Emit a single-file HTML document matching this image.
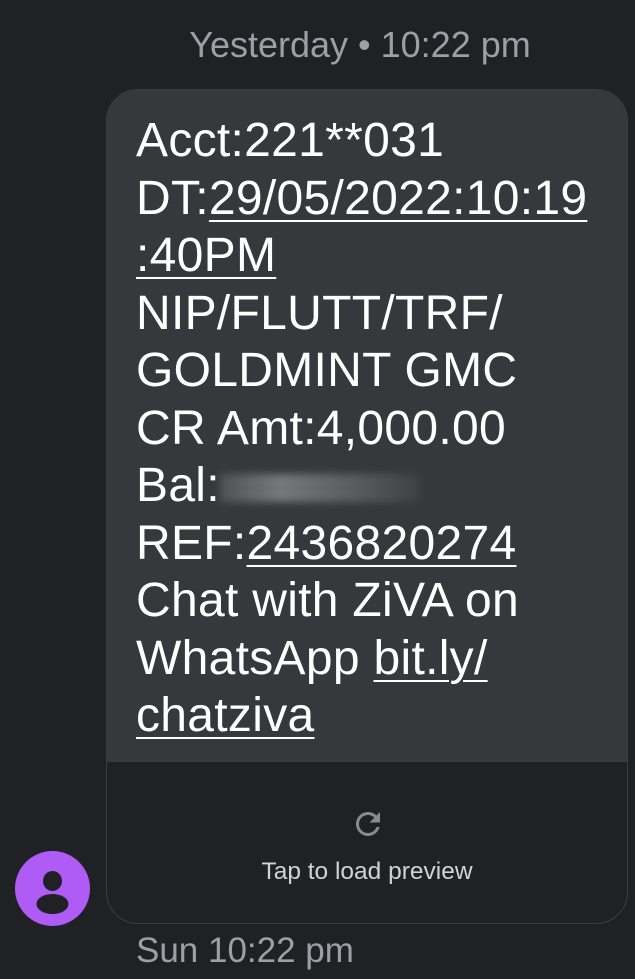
<!DOCTYPE html>
<html><head><meta charset="utf-8"><style>
html,body{margin:0;padding:0;}
body{width:635px;height:979px;background:#202124;position:relative;overflow:hidden;font-family:"Liberation Sans",sans-serif;}
.hdr{position:absolute;top:24px;left:0;width:720px;text-align:center;color:#9aa0a6;font-size:36px;}
.bub{position:absolute;left:106px;top:89px;width:522px;height:835px;border-radius:32px;background:#202124;border:1.5px solid #3c3d41;box-sizing:border-box;overflow:hidden;}
.top{position:absolute;left:0;top:0;right:0;height:672px;background:#37383c;}
.txt{position:absolute;left:29px;top:22px;color:#fff;font-size:48px;line-height:57.5px;white-space:nowrap;letter-spacing:0.3px;}
.txt u{text-decoration-thickness:2px;text-underline-offset:6px;}
.blur{display:inline-block;width:200px;height:28px;vertical-align:middle;background:linear-gradient(90deg,#6a6b6e,#b8b8ba 30%,#8a8b8d 60%,#48494c);filter:blur(4px);opacity:.5;}
.tap{position:absolute;top:768px;left:0;width:100%;text-align:center;color:#d0d2d5;font-size:24.5px;}
.ico{position:absolute;left:243px;top:716px;}
.av{position:absolute;left:15px;top:851px;width:75px;height:75px;border-radius:50%;background:#af5cf7;}
.sun{position:absolute;left:136px;top:931px;color:#9aa0a6;font-size:35px;}
</style></head><body>
<div class="hdr">Yesterday • 10:22 pm</div>
<div class="bub">
<div class="top"></div>
<div class="txt">Acct:221**031<br>DT:<u>29/05/2022:10:19</u><br><u>:40PM</u><br>NIP/FLUTT/TRF/<br>GOLDMINT GMC<br>CR Amt:4,000.00<br>Bal:<span class="blur"></span><br>REF:<u>2436820274</u><br>Chat with ZiVA on<br>WhatsApp <u>bit.ly/</u><br><u>chatziva</u></div>
<svg class="ico" width="36" height="36" viewBox="0 0 24 24"><path d="M17.65 6.35A7.96 7.96 0 0 0 12 4a8 8 0 1 0 7.73 10h-2.08A6 6 0 1 1 12 6c1.66 0 3.14.69 4.22 1.78L13 11h7V4l-2.35 2.35z" fill="#8a8b8e"/></svg>
<div class="tap">Tap to load preview</div>
</div>
<div class="av"><svg width="75" height="75" viewBox="0 0 75 75"><ellipse cx="37.5" cy="30" rx="9.5" ry="10" fill="#202124"/><ellipse cx="37.5" cy="53" rx="16" ry="10" fill="#202124"/></svg></div>
<div class="sun">Sun 10:22 pm</div>
</body></html>
